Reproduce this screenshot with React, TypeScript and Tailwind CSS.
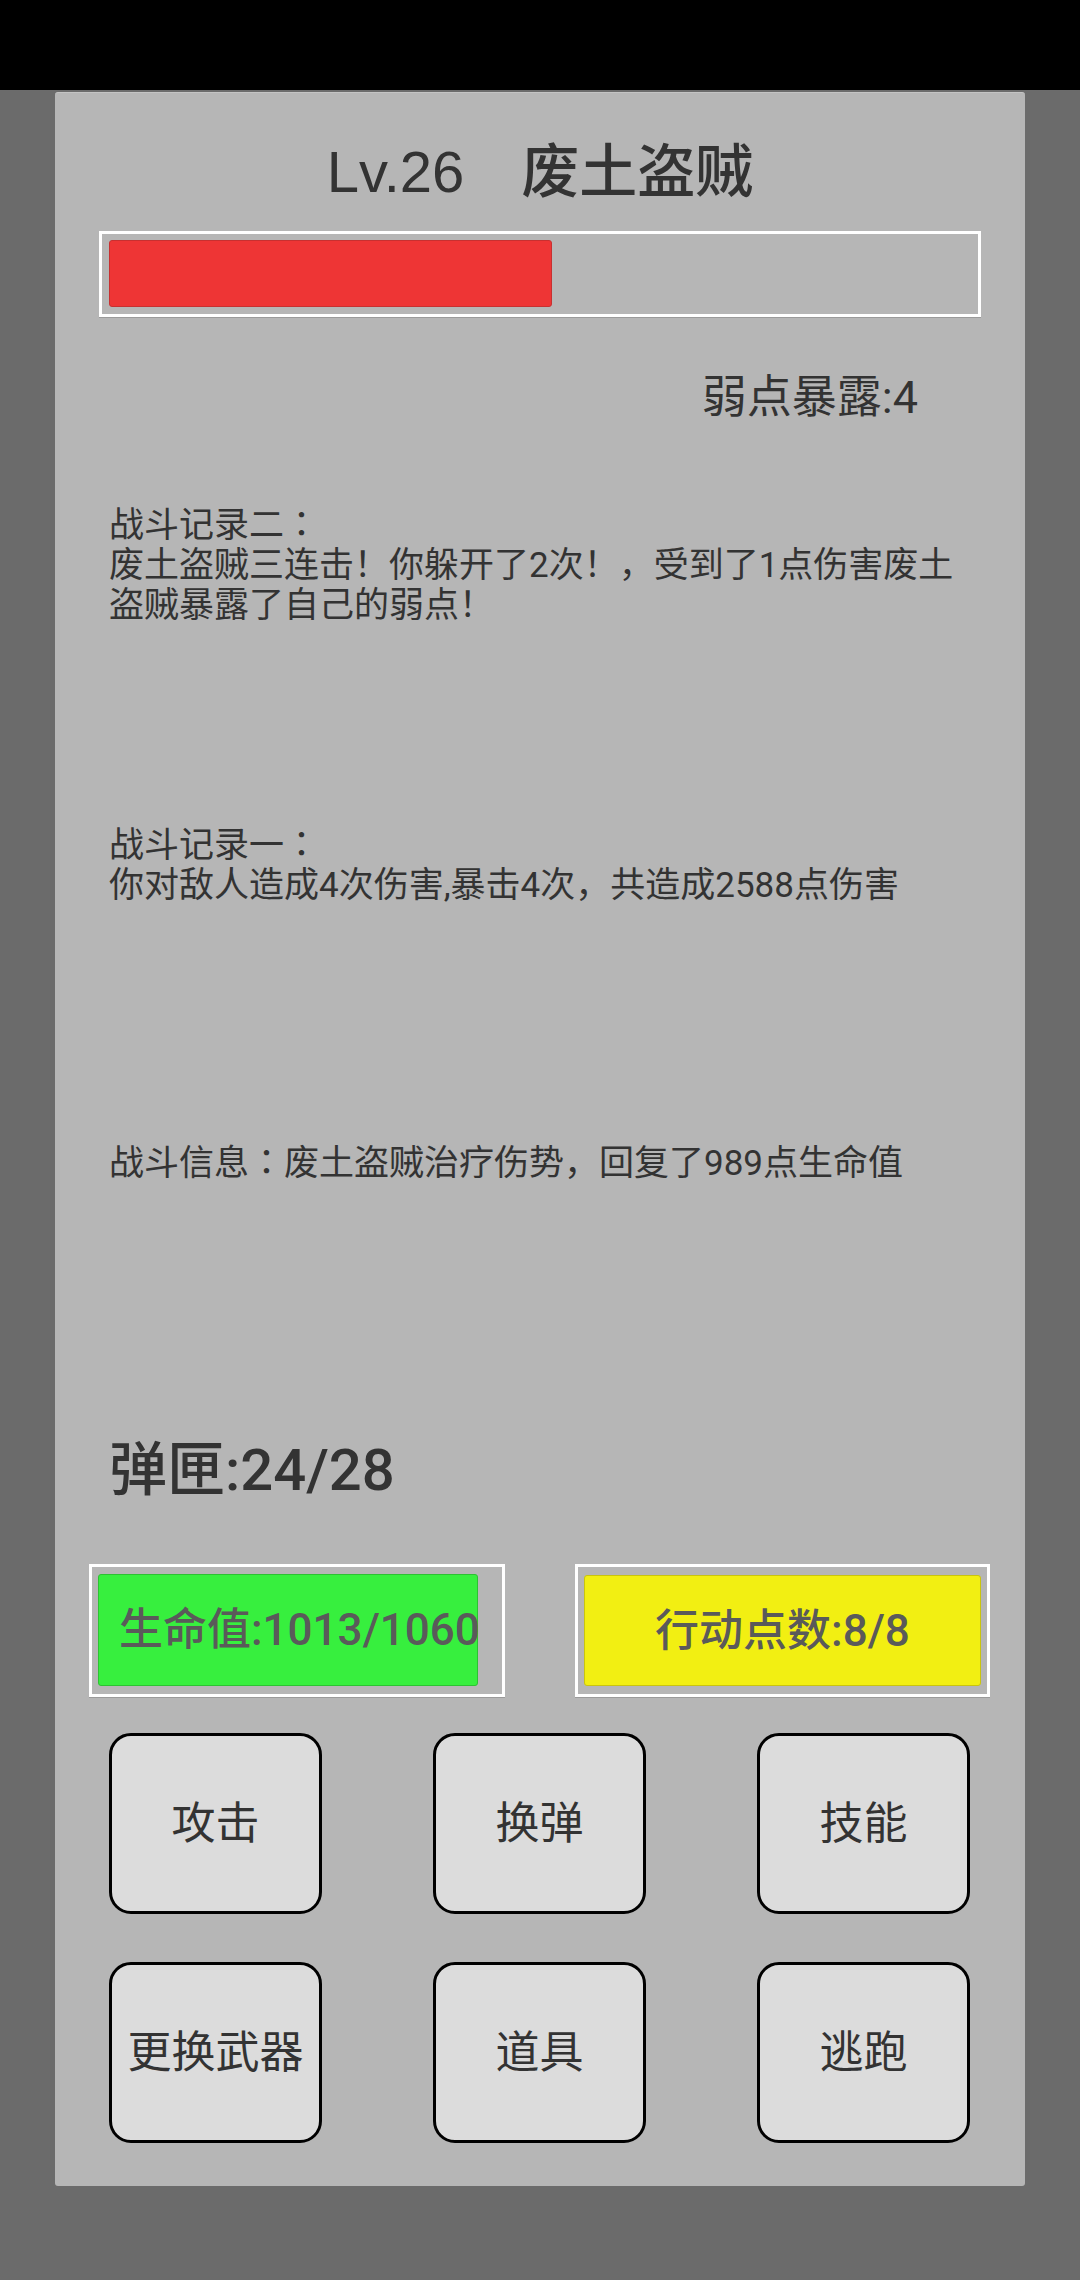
import React from "react";

const font = { fontFamily: 'Roboto, "Noto Sans CJK SC", sans-serif' };

function Colon() {
  return <span className="font-['Noto_Sans_CJK_JP']">：</span>;
}

function ActionButton({ label }: { label: string }) {
  return (
    <div className="w-[213px] h-[181px] bg-[#dcdcdc] border-[3px] border-black rounded-[22px] flex items-center justify-center text-[44px] text-[#333333] leading-none">
      {label}
    </div>
  );
}

export default function App() {
  return (
    <div className="w-[1080px] min-h-[2280px] bg-[#6b6b6b] flex flex-col" style={font}>
      <div className="h-[90px] bg-black" />
      <div className="ml-[55px] mt-[2px] w-[970px] h-[2094px] bg-[#b6b6b6] rounded-[3px] border-t border-[#c4c4c4] flex flex-col">
        <div className="mt-[44px] h-[70px] leading-[70px] text-center text-[58px] font-medium text-[#333333] whitespace-nowrap">
          <span className="font-['Liberation_Sans'] font-normal">Lv.26</span>
          <span className="ml-[57px]">废土盗贼</span>
        </div>

        <div className="mt-[24px] ml-[44px] w-[882px] h-[86px] border-[3px] border-white pt-[6px] pl-[7px] shadow-[0_1px_0_#9a9a9a]">
          <div className="w-[443px] h-[67px] bg-[#ee3535] border border-[#c83030] rounded-[3px]" />
        </div>

        <div className="mt-[55px] h-[52px] leading-[52px] pr-[107px] text-right text-[45px] text-[#333333]">
          弱点暴露:4
        </div>

        <div className="mt-[78px] px-[54px] h-[320px] text-[35px] leading-[40px] text-[#333333]">
          <div>战斗记录二<Colon /></div>
          <div>废土盗贼三连击！你躲开了2次！，受到了1点伤害废土盗贼暴露了自己的弱点！</div>
        </div>

        <div className="px-[54px] h-[318px] text-[35px] leading-[40px] text-[#333333]">
          <div>战斗记录一<Colon /></div>
          <div>你对敌人造成4次伤害,暴击4次，共造成2588点伤害</div>
        </div>

        <div className="px-[54px] h-[40px] text-[35px] leading-[40px] text-[#333333]">
          战斗信息<Colon />废土盗贼治疗伤势，回复了989点生命值
        </div>

        <div className="mt-[255px] pl-[54px] h-[70px] leading-[70px] text-[58px] font-medium text-[#333333]">
          弹匣:24/28
        </div>

        <div className="mt-[59px] ml-[34px] flex gap-[70px]">
          <div className="w-[416px] h-[133px] border-[3px] border-white pt-[7px] pl-[6px] shadow-[0_1px_0_#9a9a9a]">
            <div className="w-[380px] h-[112px] bg-[#37ef3e] border border-[#2cc232] rounded-[3px] flex items-center pl-[20px] text-[44px] font-medium text-[#5a5a5a] whitespace-nowrap">
              生命值:1013/1060
            </div>
          </div>
          <div className="w-[415px] h-[133px] border-[3px] border-white pt-[8px] pl-[6px] shadow-[0_1px_0_#9a9a9a]">
            <div className="w-[397px] h-[111px] bg-[#f2ef12] border border-[#c9c40e] rounded-[3px] flex items-center justify-center text-[44px] font-medium text-[#5a5a5a] whitespace-nowrap">
              行动点数:8/8
            </div>
          </div>
        </div>

        <div className="mt-[36px] ml-[54px] grid grid-cols-[213px_213px_213px] gap-x-[111px] gap-y-[48px]">
          <ActionButton label="攻击" />
          <ActionButton label="换弹" />
          <ActionButton label="技能" />
          <ActionButton label="更换武器" />
          <ActionButton label="道具" />
          <ActionButton label="逃跑" />
        </div>
      </div>
    </div>
  );
}
